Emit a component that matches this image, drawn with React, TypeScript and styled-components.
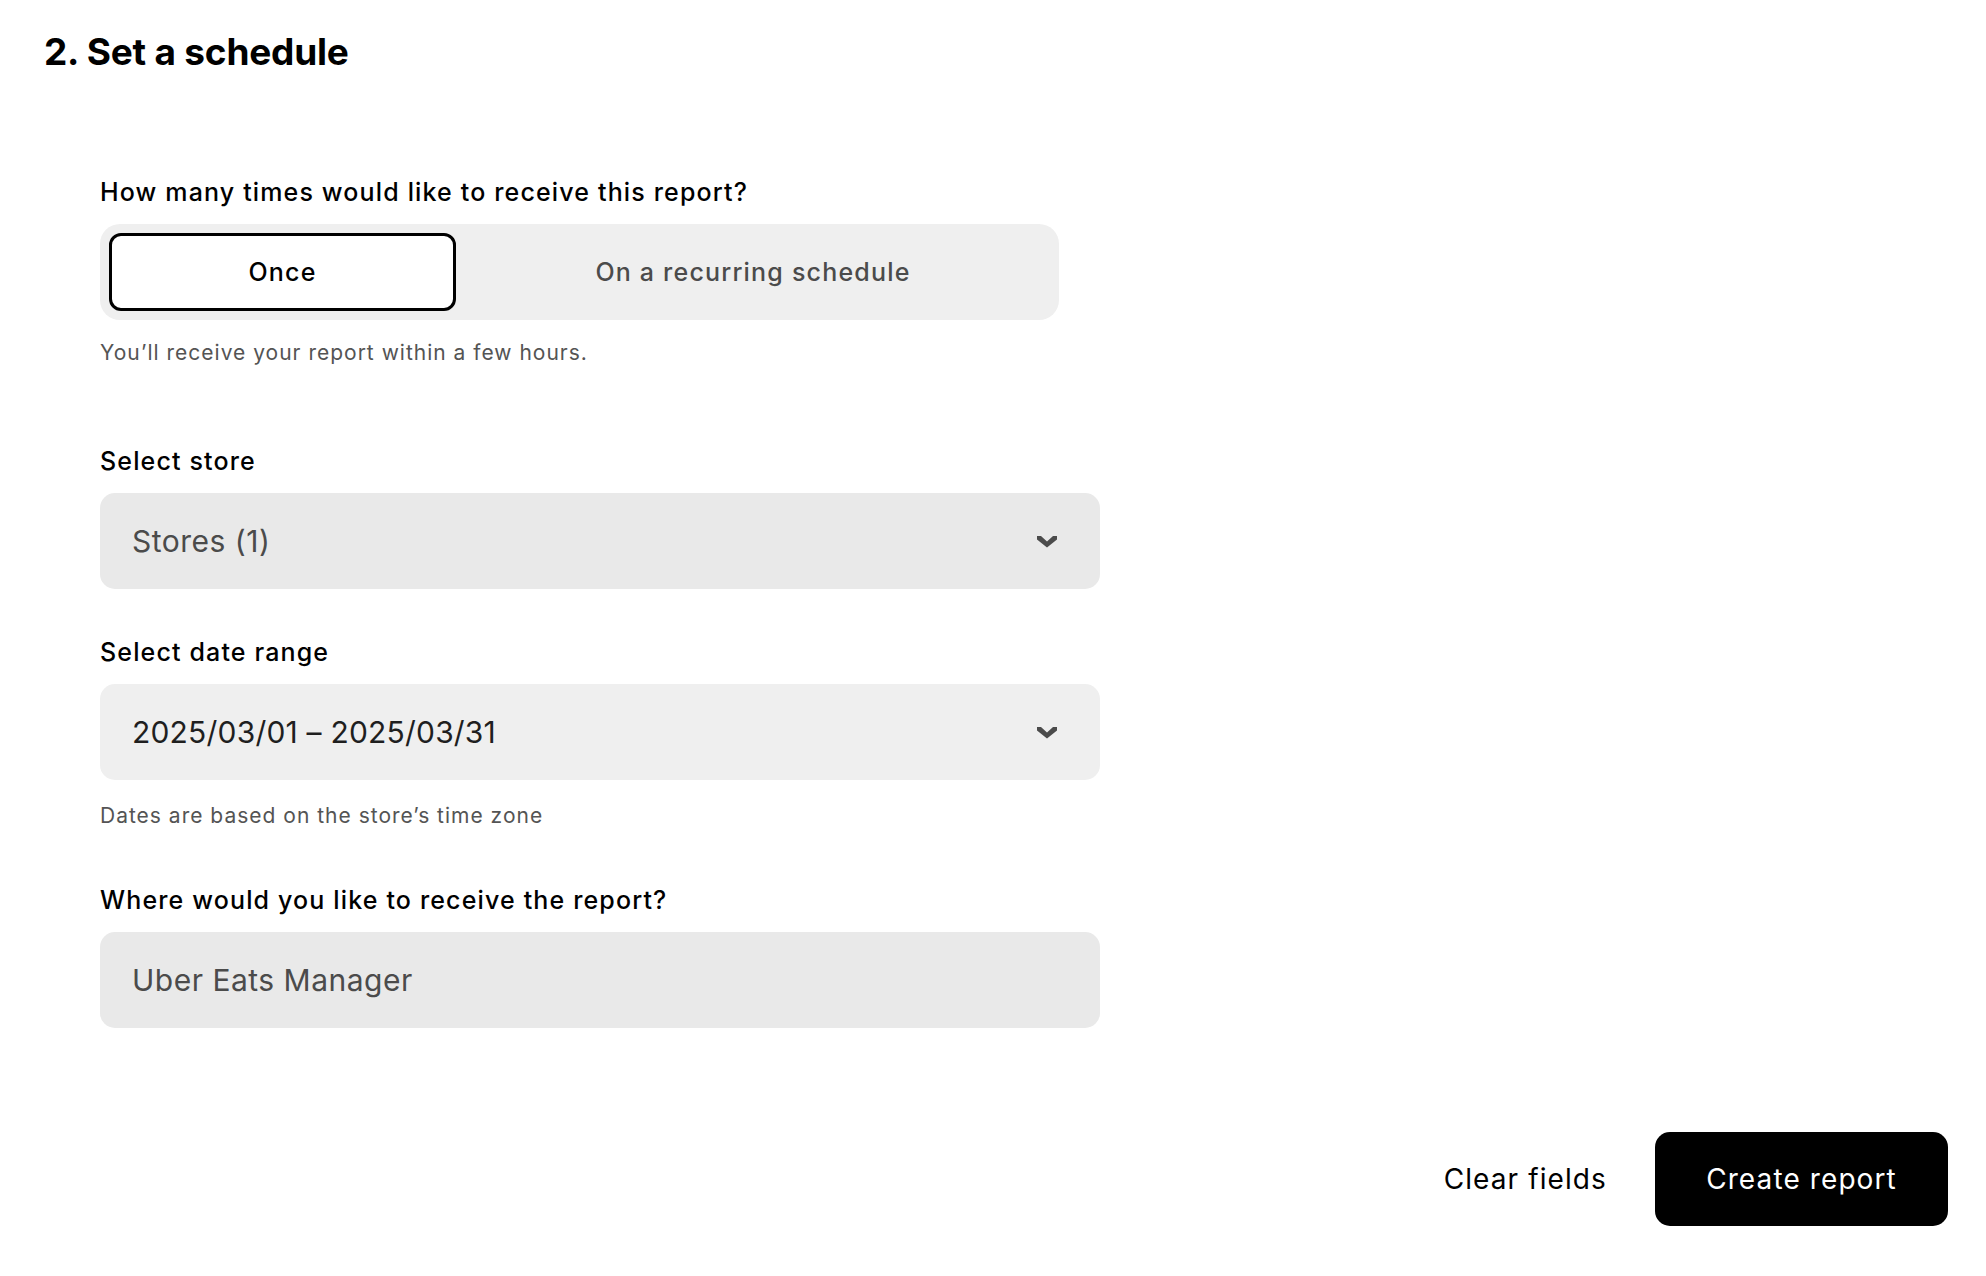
import React, { useState } from "react";
import styled, { createGlobalStyle } from "styled-components";

const GlobalStyle = createGlobalStyle`
  * {
    box-sizing: border-box;
  }
  body {
    margin: 0;
    background: #fff;
    color: #000;
    font-family: Inter, "Noto Sans", "Liberation Sans", sans-serif;
  }
`;

type Frequency = "once" | "recurring";

export default function App() {
  const [frequency, setFrequency] = useState<Frequency>("once");

  return (
    <Page>
      <GlobalStyle />
      <Title>2. Set a schedule</Title>

      <Form onSubmit={(e) => e.preventDefault()}>
        <Question $top={104}>
          <Label>How many times would like to receive this report?</Label>
          <Segmented>
            <Segment
              type="button"
              $active={frequency === "once"}
              $grow={false}
              onClick={() => setFrequency("once")}
            >
              Once
            </Segment>
            <Segment
              type="button"
              $active={frequency === "recurring"}
              $grow
              onClick={() => setFrequency("recurring")}
            >
              On a recurring schedule
            </Segment>
          </Segmented>
          <Hint $top={21}>You’ll receive your report within a few hours.</Hint>
        </Question>

        <Question $top={82}>
          <Label>Select store</Label>
          <SelectBox type="button" $bg="#e9e9e9">
            <Value $tone="muted">Stores (1)</Value>
            <Chevron />
          </SelectBox>
        </Question>

        <Question $top={49}>
          <Label>Select date range</Label>
          <SelectBox type="button" $bg="#efefef">
            <Value $tone="strong">2025/03/01 – 2025/03/31</Value>
            <Chevron />
          </SelectBox>
          <Hint $top={24}>Dates are based on the store’s time zone</Hint>
        </Question>

        <Question $top={58}>
          <Label>Where would you like to receive the report?</Label>
          <ReadOnlyBox>
            <Value $tone="muted">Uber Eats Manager</Value>
          </ReadOnlyBox>
        </Question>
      </Form>

      <Actions>
        <GhostButton type="button">Clear fields</GhostButton>
        <PrimaryButton type="submit">Create report</PrimaryButton>
      </Actions>
    </Page>
  );
}

function Chevron() {
  return (
    <ChevronIcon viewBox="0 0 20 13" aria-hidden="true">
      <polygon points="0,1 4,1 10,6.5 16,1 20,1 20,4.5 10,12.5 0,4.5" />
    </ChevronIcon>
  );
}

const Page = styled.div`
  padding: 30px 38px 40px 44px;
  min-height: 1276px;
`;

const Title = styled.h2`
  margin: 0;
  font-size: 37px;
  line-height: 44px;
  font-weight: 700;
  letter-spacing: -0.2px;
`;

const Form = styled.form`
  padding-left: 56px;
  width: 1056px;
`;

const Question = styled.section<{ $top: number }>`
  margin-top: ${(p) => p.$top}px;
  display: flex;
  flex-direction: column;
`;

const Label = styled.label`
  font-size: 25px;
  line-height: 28px;
  font-weight: 500;
  letter-spacing: 1.15px;
  margin-bottom: 18px;
`;

const Hint = styled.p<{ $top: number }>`
  margin: ${(p) => p.$top}px 0 0;
  font-size: 21px;
  line-height: 24px;
  color: #545454;
  letter-spacing: 1px;
`;

const Segmented = styled.div`
  display: flex;
  width: 959px;
  height: 96px;
  padding: 9px;
  background: #efefef;
  border-radius: 20px;
`;

const Segment = styled.button<{ $active: boolean; $grow: boolean }>`
  flex: ${(p) => (p.$grow ? "1 1 auto" : "0 0 347px")};
  height: 100%;
  border: 3px solid ${(p) => (p.$active ? "#000" : "transparent")};
  border-radius: 12px;
  background: ${(p) => (p.$active ? "#fff" : "transparent")};
  color: ${(p) => (p.$active ? "#000" : "#4b4b4b")};
  font-family: inherit;
  font-size: 25px;
  font-weight: 500;
  letter-spacing: 1.2px;
  cursor: pointer;
`;

const SelectBox = styled.button<{ $bg: string }>`
  display: flex;
  align-items: center;
  justify-content: space-between;
  width: 1000px;
  height: 96px;
  padding: 0 43px 0 32px;
  border: none;
  border-radius: 15px;
  background: ${(p) => p.$bg};
  font-family: inherit;
  text-align: left;
  cursor: pointer;
`;

const ReadOnlyBox = styled.div`
  display: flex;
  align-items: center;
  width: 1000px;
  height: 96px;
  padding: 0 32px;
  border-radius: 15px;
  background: #e9e9e9;
`;

const Value = styled.span<{ $tone: "muted" | "strong" }>`
  font-size: 30px;
  font-weight: 400;
  letter-spacing: ${(p) => (p.$tone === "strong" ? "0.2px" : "0.5px")};
  color: ${(p) => (p.$tone === "strong" ? "#1f1f1f" : "#4b4b4b")};
`;

const ChevronIcon = styled.svg`
  width: 20px;
  height: 13px;
  fill: #4b4b4b;
  flex: none;
`;

const Actions = styled.div`
  display: flex;
  justify-content: flex-end;
  align-items: center;
  gap: 24px;
  margin-top: 104px;
`;

const BaseButton = styled.button`
  height: 94px;
  border: none;
  border-radius: 15px;
  font-family: inherit;
  font-size: 28px;
  font-weight: 400;
  letter-spacing: 1.1px;
  cursor: pointer;
`;

const GhostButton = styled(BaseButton)`
  padding: 0 24px;
  background: transparent;
  color: #000;
`;

const PrimaryButton = styled(BaseButton)`
  width: 293px;
  background: #000;
  color: #fff;
`;
